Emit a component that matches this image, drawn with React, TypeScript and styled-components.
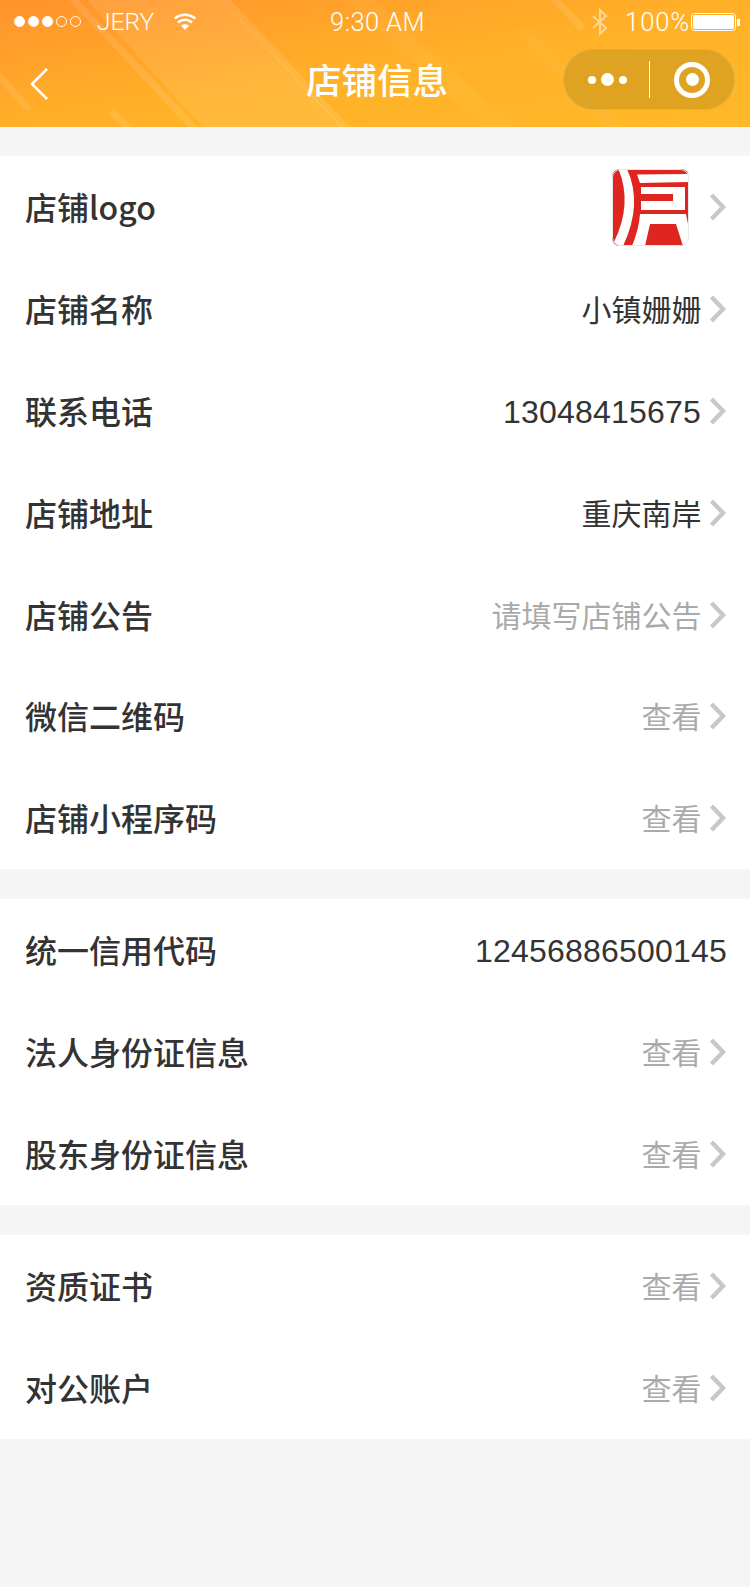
import React from "react";
import styled, { createGlobalStyle } from "styled-components";

const Global = createGlobalStyle`
  html, body { margin: 0; padding: 0; background: #f5f5f5; }
  * { box-sizing: border-box; }
`;
const Page = styled.div`
  width: 750px; height: 1587px; background: #f5f5f5;
  font-family: "Liberation Sans", "Noto Sans CJK SC", sans-serif; overflow: hidden;
`;
const Header = styled.header`
  position: relative; height: 127px; margin-bottom: 29px; overflow: hidden;
  background: linear-gradient(to bottom right, #ff932c 0%, #ffb028 50%, #ffb927 100%);
  color: #fff;
`;
const Stripes = styled.svg`
  position: absolute; inset: 0; width: 750px; height: 127px;
`;
const StatusBar = styled.div`
  position: relative; height: 42px; display: grid; grid-template-columns: 1fr auto 1fr; align-items: center;
  padding: 1px 9px 0 14px; font-family: Roboto, "Liberation Sans", sans-serif; font-size: 24.5px; font-weight: 300;
`;
const StatusLeft = styled.div`display: flex; align-items: center;`;
const StatusRight = styled.div`display: flex; align-items: center; justify-content: flex-end;`;
const StatusNumbers = styled.span<{ $spacing: number }>`
  font-size: 25.5px; letter-spacing: ${p => p.$spacing}px;
`;
const Signal = styled.div`display: flex; gap: 3px; margin-right: 16px;`;
const Dot = styled.span<{ $on: boolean }>`
  width: 11px; height: 11px; border-radius: 50%;
  border: 1px solid #fff; background: ${p => (p.$on ? "#fff" : "transparent")};
`;
const WifiIcon = styled.svg`width: 24px; height: 20px; margin-left: 19px; display: block;`;
const BluetoothIcon = styled.svg`width: 16px; height: 28px; margin-right: 17px; opacity: 0.5; display: block;`;
const BatteryIcon = styled.svg`width: 50px; height: 20px; margin-left: 1px; display: block;`;
const NavBar = styled.div`
  position: relative; height: 85px; display: grid; grid-template-columns: 1fr auto 1fr; align-items: center;
  padding: 0 15px 10px 15px;
`;
const BackIcon = styled.svg`width: 20px; height: 34px; display: block; margin: 9px 0 0 14px;`;
const Title = styled.h1`
  margin: 0 0 2px 4px; font-size: 35.5px; font-weight: 500; line-height: 50px;
  font-family: "Noto Sans CJK SC", sans-serif;
`;
const Capsule = styled.div`
  justify-self: end; width: 172px; height: 61px; border-radius: 31px;
  background: rgba(211, 155, 32, 0.72); border: 1px solid rgba(255, 255, 255, 0.12);
  display: flex; align-items: center;
`;
const MoreZone = styled.div`
  width: 85px; display: flex; justify-content: center; align-items: center; gap: 5px; padding-left: 1px;
`;
const MoreDot = styled.span<{ $big?: boolean }>`
  width: ${p => (p.$big ? 13 : 8)}px; height: ${p => (p.$big ? 13 : 8)}px; border-radius: 50%; background: #fff;
`;
const CapDivider = styled.span`width: 1px; height: 37px; background: #fff;`;
const TargetZone = styled.div`flex: 1; display: flex; justify-content: center;`;
const Target = styled.span`
  width: 36px; height: 36px; border-radius: 50%; border: 5px solid #fff;
  display: flex; align-items: center; justify-content: center;
  &::after { content: ""; width: 13px; height: 13px; border-radius: 50%; background: #fff; }
`;
const Group = styled.section`
  background: #fff; margin-bottom: 30px;
`;
const Row = styled.div`
  height: 101.9px; display: flex; align-items: center; justify-content: space-between; padding: 0 23px 0 25px;
`;
const Label = styled.div`
  font-family: "Noto Sans CJK SC", sans-serif; font-size: 32px; font-weight: 500; color: #333; margin-bottom: 2px;
`;
const Right = styled.div`display: flex; align-items: center;`;
const Value = styled.span<{ $muted?: boolean; $num?: boolean }>`
  font-family: ${p => (p.$num ? '"Liberation Sans"' : '"Noto Sans CJK SC"')}, sans-serif;
  font-size: ${p => (p.$num ? 32 : 30)}px; color: ${p => (p.$muted ? "#aaa" : "#333")};
  margin-top: ${p => (p.$num ? 3 : 0)}px;
  margin-bottom: ${p => (p.$num ? 0 : 2)}px;
  margin-right: ${p => (p.$num ? 0 : -0.5)}px;
  letter-spacing: ${p => (p.$num ? "0.2px" : "0")};
`;
const ChevronSvg = styled.svg`width: 18px; height: 28px; margin-left: 8px; display: block;`;
const LogoSvg = styled.svg`width: 77px; height: 77px; display: block; margin: 1px 12px 0 0;`;

const Chevron = () => (
  <ChevronSvg viewBox="0 0 18 28"><path d="M2.5 2 L14 14 L2.5 26" fill="none" stroke="#c7c7cc" strokeWidth="4.4" /></ChevronSvg>
);
const Logo = () => (
  <LogoSvg viewBox="0 0 77 77">
    <rect width="77" height="77" rx="8" fill="#df251f" />
    <path d="M6.5 0 Q20.7 35 2 73 L7 77 H11 Q31 35 15 0 Z" fill="#fff" />
    <path d="M25 5.5 L77 5 V13 L28 14 Z" fill="#fff" />
    <path d="M29 18 H73 V41 H29 V32 H61 V25 H29 Z" fill="#fff" />
    <path d="M28 45 H74 L77 60 V77 H20 Q27 60 28 45 Z" fill="#fff" />
    <path d="M38 55 H64 L71 77 H33 Z" fill="#df251f" />
    <rect x="0.5" y="0.5" width="76" height="76" rx="8" fill="none" stroke="#e8e8e8" />
  </LogoSvg>
);

type Item = { label: string; value?: string; muted?: boolean; num?: boolean; logo?: boolean; noArrow?: boolean };
const groups: Item[][] = [
  [
    { label: "店铺logo", logo: true },
    { label: "店铺名称", value: "小镇姗姗" },
    { label: "联系电话", value: "13048415675", num: true },
    { label: "店铺地址", value: "重庆南岸" },
    { label: "店铺公告", value: "请填写店铺公告", muted: true },
    { label: "微信二维码", value: "查看", muted: true },
    { label: "店铺小程序码", value: "查看", muted: true },
  ],
  [
    { label: "统一信用代码", value: "12456886500145", num: true, noArrow: true },
    { label: "法人身份证信息", value: "查看", muted: true },
    { label: "股东身份证信息", value: "查看", muted: true },
  ],
  [
    { label: "资质证书", value: "查看", muted: true },
    { label: "对公账户", value: "查看", muted: true },
  ],
];

export default function App() {
  return (
    <Page>
      <Global />
      <Header>
        <Stripes viewBox="0 0 750 127">
          <polygon points="87,0 222,0 343,127 203,127" fill="#fff" opacity="0.09" />
          <polygon points="345,0 375,0 515,127 482,127" fill="#fff" opacity="0.04" />
          <polygon points="515,30 530,30 625,127 608,127" fill="#fff" opacity="0.04" />
          <path d="M70 -4 L193 127 M222 -4 L345 127 M0 77 L27 107 M113 113 L128 127 M552 -4 L581 27" stroke="#fff" strokeOpacity="0.1" strokeWidth="7" strokeLinecap="round" />
        </Stripes>
        <StatusBar>
          <StatusLeft>
            <Signal>{[1, 1, 1, 0, 0].map((d, i) => <Dot key={i} $on={!!d} />)}</Signal>
            JERY
            <WifiIcon viewBox="0 0 24 20">
              <path d="M12 18 L8 13.5 Q12 10.5 16 13.5 Z" fill="#fff" />
              <path d="M5 10.5 Q12 5 19 10.5 M1.5 6.5 Q12 -1 22.5 6.5" stroke="#fff" strokeWidth="2.6" fill="none" />
            </WifiIcon>
          </StatusLeft>
          <StatusNumbers $spacing={0.4}>9:30 AM</StatusNumbers>
          <StatusRight>
            <BluetoothIcon viewBox="0 0 16 28">
              <path d="M1 8 L14 20 L8 26 V2 L14 8 L1 20" fill="none" stroke="#fff" strokeWidth="2" />
            </BluetoothIcon>
            <StatusNumbers $spacing={0.9}>100%</StatusNumbers>
            <BatteryIcon viewBox="0 0 50 20">
              <rect x="0.5" y="1.5" width="44" height="17" rx="3" fill="none" stroke="#fff" />
              <rect x="2" y="3" width="41" height="14" rx="2" fill="#fff" />
              <rect x="46" y="7" width="3" height="7" fill="#fff" />
            </BatteryIcon>
          </StatusRight>
        </StatusBar>
        <NavBar>
          <BackIcon viewBox="0 0 20 34">
            <path d="M18 2 L3 17 L18 32" fill="none" stroke="#fff" strokeWidth="2.5" />
          </BackIcon>
          <Title>店铺信息</Title>
          <Capsule>
            <MoreZone><MoreDot /><MoreDot $big /><MoreDot /></MoreZone>
            <CapDivider />
            <TargetZone><Target /></TargetZone>
          </Capsule>
        </NavBar>
      </Header>
      {groups.map((g, gi) => (
        <Group key={gi}>
          {g.map((r, i) => (
            <Row key={i}>
              <Label>{r.label}</Label>
              <Right>
                {r.logo ? <Logo /> : <Value $muted={r.muted} $num={r.num}>{r.value}</Value>}
                {!r.noArrow && <Chevron />}
              </Right>
            </Row>
          ))}
        </Group>
      ))}
    </Page>
  );
}
